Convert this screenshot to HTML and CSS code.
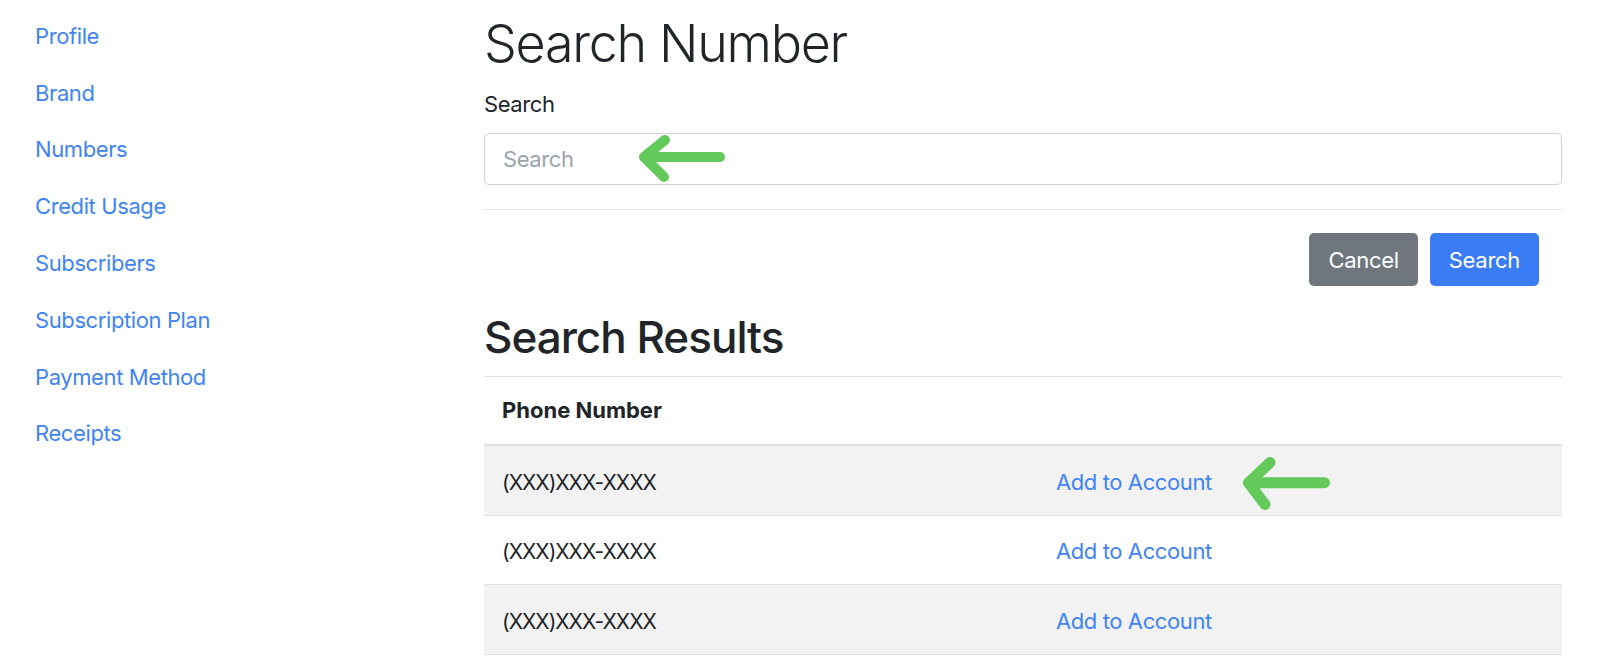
FILE: index.html
```html
<!DOCTYPE html>
<html lang="en">
<head>
<meta charset="utf-8">
<title>Search Number</title>
<link rel="stylesheet" href="styles.css">
</head>
<body>
<div class="page">
  <nav class="sidebar">
    <a class="nav-link" href="#">Profile</a>
    <a class="nav-link" href="#">Brand</a>
    <a class="nav-link" href="#">Numbers</a>
    <a class="nav-link" href="#">Credit Usage</a>
    <a class="nav-link" href="#">Subscribers</a>
    <a class="nav-link" href="#">Subscription Plan</a>
    <a class="nav-link" href="#">Payment Method</a>
    <a class="nav-link" href="#">Receipts</a>
  </nav>
  <main class="content">
    <h1 class="title">Search Number</h1>
    <div class="form-group">
      <label class="label" for="search">Search</label>
      <input class="input" id="search" type="text" placeholder="Search">
    </div>
    <hr class="divider">
    <div class="actions">
      <button class="btn btn-secondary" type="button">Cancel</button>
      <button class="btn btn-primary" type="button">Search</button>
    </div>
    <h2 class="subtitle">Search Results</h2>
    <table class="table">
      <thead>
        <tr><th class="col-phone">Phone Number</th><th></th></tr>
      </thead>
      <tbody>
        <tr class="striped"><td class="phone">(XXX)XXX-XXXX</td><td><a class="link" href="#">Add to Account</a></td></tr>
        <tr><td class="phone">(XXX)XXX-XXXX</td><td><a class="link" href="#">Add to Account</a></td></tr>
        <tr class="striped"><td class="phone">(XXX)XXX-XXXX</td><td><a class="link" href="#">Add to Account</a></td></tr>
      </tbody>
    </table>
  </main>
  <svg class="arrow arrow-input" width="100" height="60" viewBox="0 0 100 60" aria-hidden="true">
    <path d="M33 12 L12 29 L32 49 M12 29 L88 29" fill="none" stroke="#63c95a" stroke-width="10" stroke-linecap="round" stroke-linejoin="round"/>
  </svg>
  <svg class="arrow arrow-row" width="100" height="66" viewBox="0 0 100 66" aria-hidden="true">
    <path d="M35 12.5 L13.5 32.7 L30 54.5 M13.5 32.7 L89.5 32.7" fill="none" stroke="#63c95a" stroke-width="11" stroke-linecap="round" stroke-linejoin="round"/>
  </svg>
</div>
</body>
</html>
```

FILE: styles.css
```css
* { box-sizing: border-box; }

html, body {
  margin: 0;
  padding: 0;
  background: #ffffff;
}

body {
  font-family: "Inter", "Liberation Sans", sans-serif;
  font-size: 22px;
  line-height: 33px;
  letter-spacing: -0.4px;
  color: #212529;
}

.page {
  position: relative;
  display: grid;
  grid-template-columns: 484px 1078px;
  width: 1600px;
  min-height: 668px;
}

.sidebar {
  display: flex;
  flex-direction: column;
  padding: 8px 0 0 35px;
}

.nav-link {
  display: block;
  padding: 11.9px 0;
  color: #3f84f6;
  text-decoration: none;
}

.content {
  display: flex;
  flex-direction: column;
  padding-top: 12px;
}

.title {
  margin: 0 0 12px 0;
  font-size: 52px;
  line-height: 63.6px;
  font-weight: 300;
  letter-spacing: -1.3px;
}

.form-group {
  display: flex;
  flex-direction: column;
}

.label {
  display: block;
  margin-bottom: 12.5px;
}

.input {
  height: 52px;
  padding: 0 18px;
  border: 1px solid #ced4da;
  border-radius: 5px;
  font: inherit;
  letter-spacing: -0.4px;
  color: #495057;
  background: #fff;
}

.input::placeholder { color: #9aa3ad; }

.divider {
  margin: 24px 0 23px 0;
  border: 0;
  border-top: 1px solid #e6e6e6;
  height: 0;
}

.actions {
  display: flex;
  justify-content: flex-end;
  gap: 12px;
  padding-right: 23px;
}

.btn {
  height: 53px;
  padding: 2px 19px 0 19px;
  border: 0;
  border-radius: 5px;
  font: inherit;
  letter-spacing: -0.3px;
  color: #fff;
}

.btn-secondary { background: #6f767d; }
.btn-primary { background: #3a7cf6; }

.subtitle {
  margin: 24.6px 0 12.6px 0;
  font-size: 44px;
  line-height: 52.8px;
  font-weight: 500;
  letter-spacing: -1px;
}

.table {
  width: 100%;
  border-collapse: collapse;
}

.table th,
.table td {
  padding: 19.8px 18px 15.8px 18px;
  border-top: 1px solid #dee2e6;
  text-align: left;
  vertical-align: middle;
}

.table th {
  padding: 17px 18px;
  font-weight: 700;
  letter-spacing: 0;
  border-bottom: 2px solid #dee2e6;
}

.table td.phone {
  font-size: 21px;
  letter-spacing: -1px;
}

.col-phone { width: 554px; }

.table tbody tr:last-child td { border-bottom: 1px solid #dee2e6; }

.striped { background: #f2f2f2; }

.link {
  color: #3f84f6;
  text-decoration: none;
}

.arrow {
  position: absolute;
}

.arrow-input { left: 632px; top: 128px; }
.arrow-row { left: 1235px; top: 450px; }
```
